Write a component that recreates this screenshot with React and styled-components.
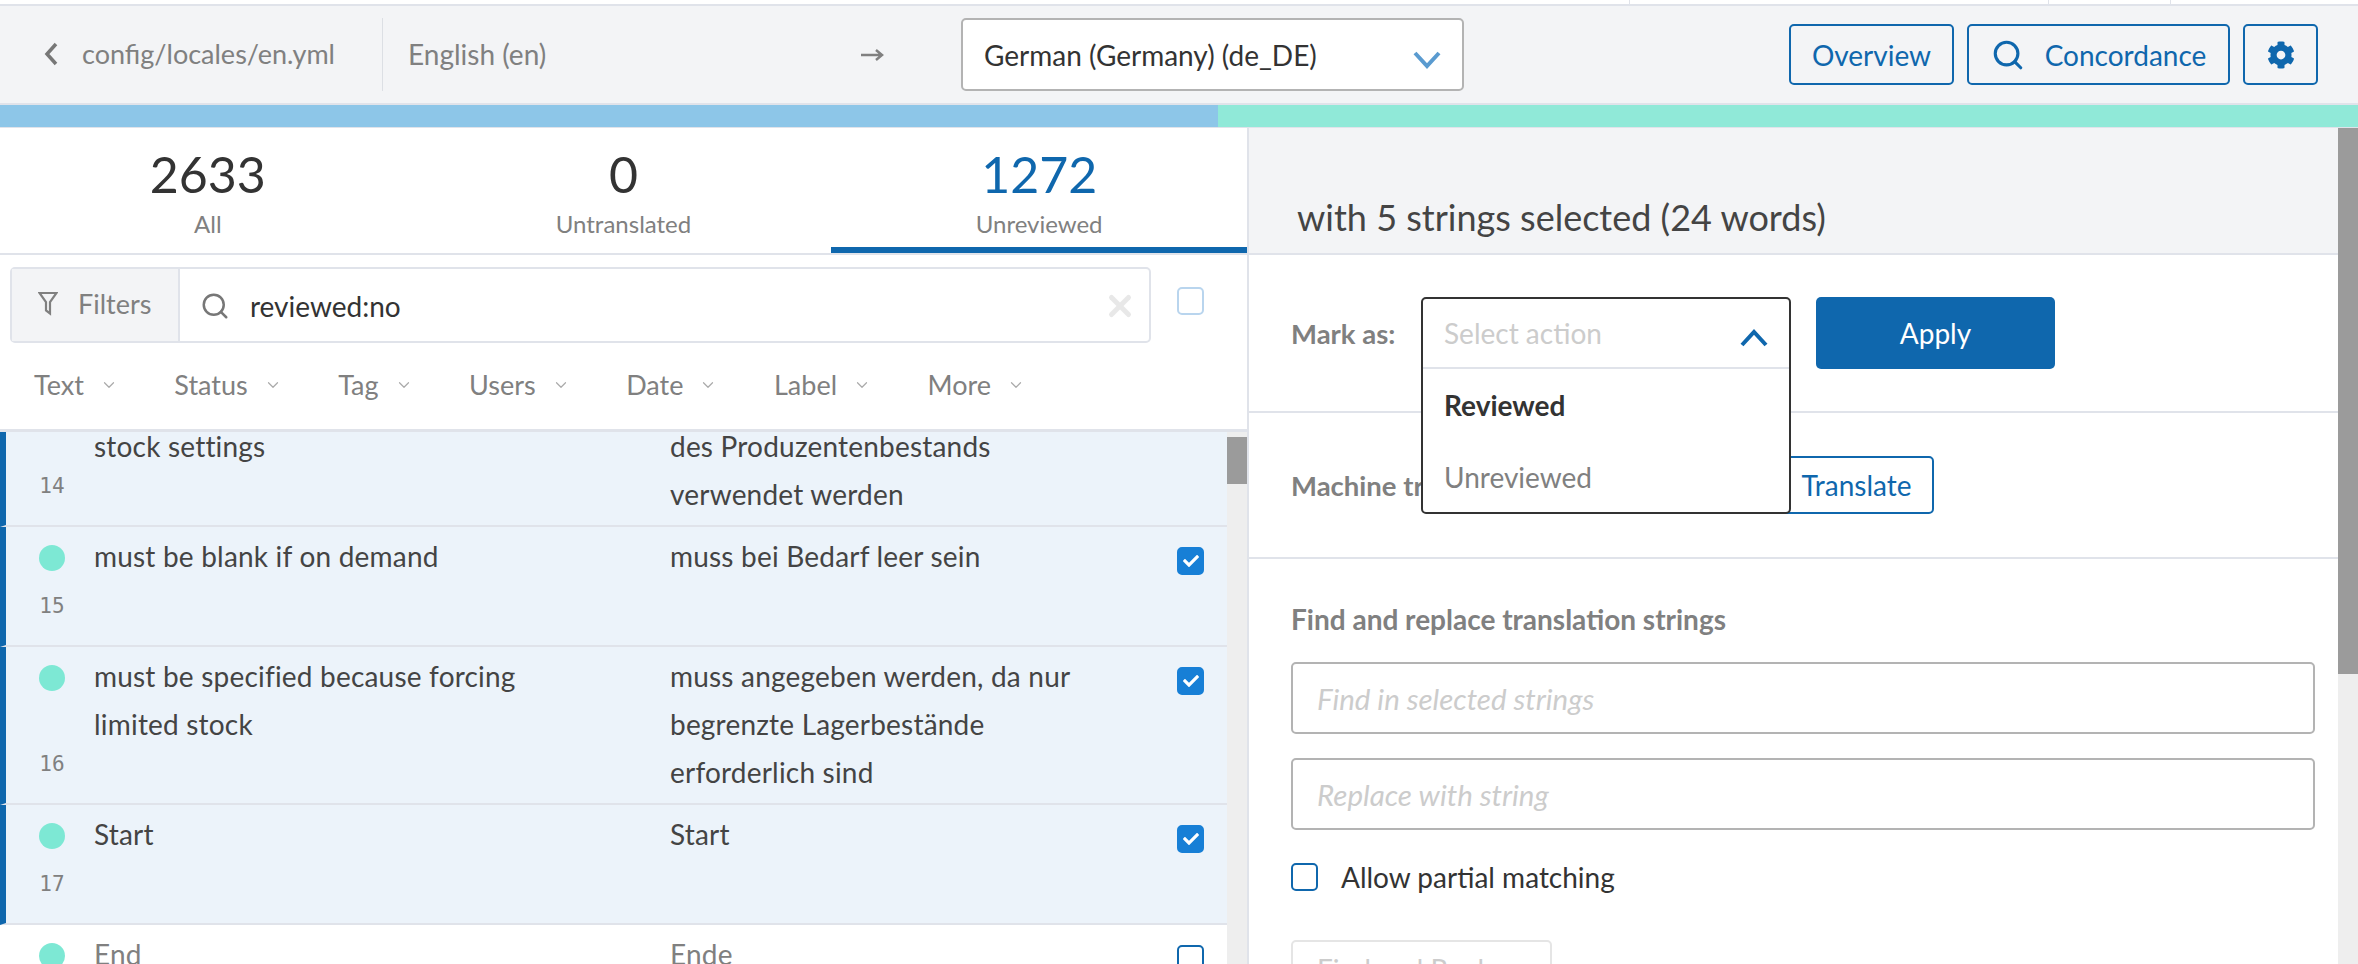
import React from 'react';
import styled, { createGlobalStyle } from 'styled-components';
import { ChevronDown, Search, X } from 'lucide-react';
import { FaCog, FaCheck } from 'react-icons/fa';

const BLUE = '#0f67ad';
const LINE = '#e0e3ea';
const FONT = 'Lato, "Liberation Sans", sans-serif';

const Global = createGlobalStyle`
  html, body { margin: 0; padding: 0; height: 100%; overflow: hidden; background: #fff; }
  body { font-family: ${FONT}; color: #333; }
  #root { height: 100%; }
  * { box-sizing: border-box; }
`;

const Page = styled.div`
  display: flex;
  flex-direction: column;
  width: 2358px;
  height: 964px;
  overflow: hidden;
`;

const TopStrip = styled.div`
  display: flex;
  height: 6px;
  flex: none;
  border-bottom: 2px solid ${LINE};
  background: #fff;
  padding-left: 1629px;
`;

const StripCell = styled.div`
  width: ${props => props.w}px;
  border-left: 1px solid ${LINE};
`;

const Header = styled.header`
  display: flex;
  align-items: center;
  flex: none;
  height: 99px;
  padding: 0 40px 0 38px;
  background: #f3f4f6;
  border-bottom: 2px solid ${LINE};
`;

const BackLink = styled.div`
  display: flex;
  align-items: center;
  gap: 24px;
  width: 345px;
  height: 73px;
  padding-left: 6px;
  padding-bottom: 2px;
  font-size: 27px;
  color: #808080;
  border-right: 1px solid #dcdfe4;
`;

const SourceLang = styled.div`
  width: 478px;
  padding-left: 25px;
  padding-bottom: 2px;
  font-size: 28px;
  color: #808080;
`;

const ArrowGlyph = styled.svg`
  width: 24px;
  height: 14px;
  margin-right: 76px;
  flex: none;
`;

const LangSelect = styled.div`
  display: flex;
  align-items: center;
  justify-content: space-between;
  width: 503px;
  height: 73px;
  padding: 0 21px 0 21px;
  background: #fff;
  border: 2px solid #b3b3b3;
  border-radius: 5px;
  font-size: 28px;
  color: #333;
`;

const Caret = styled.svg`
  flex: none;
  width: 28px;
  height: 18px;
  margin-top: 10px;
  fill: none;
  stroke: ${props => props.color};
  stroke-width: 4;
`;

const HeaderActions = styled.div`
  display: flex;
  gap: 13px;
  margin-left: auto;
`;

const OutlineButton = styled.button`
  display: inline-flex;
  align-items: center;
  justify-content: center;
  gap: 20px;
  height: ${props => props.h || 61}px;
  width: ${props => props.w}px;
  background: #fff;
  border: 2px solid ${BLUE};
  border-radius: 5px;
  color: ${BLUE};
  font-family: ${FONT};
  font-size: 28px;
  padding: 0;
`;

const HeaderButton = styled(OutlineButton)`
  background: #f3f4f6;
`;

const Progress = styled.div`
  display: flex;
  flex: none;
  height: 22px;
`;

const ProgressPart = styled.div`
  width: ${props => props.w};
  background: ${props => props.color};
`;

const Main = styled.div`
  display: flex;
  flex: 1;
  min-height: 0;
  border-top: 1px solid ${LINE};
`;

const LeftPane = styled.section`
  display: flex;
  flex-direction: column;
  width: 1247px;
  flex: none;
  min-height: 0;
`;

const Tabs = styled.div`
  display: grid;
  grid-template-columns: repeat(3, 1fr);
  flex: none;
  height: 127px;
  border-bottom: 2px solid ${LINE};
`;

const Tab = styled.div`
  display: flex;
  flex-direction: column;
  align-items: center;
  height: 125px;
  padding-top: 16px;
  border-bottom: ${props => (props.active ? `6px solid ${BLUE}` : 'none')};
  color: ${props => (props.active ? BLUE : '#333')};
`;

const TabCount = styled.div`
  font-size: 50px;
  line-height: 60px;
`;

const TabLabel = styled.div`
  margin-top: 3px;
  font-size: 24px;
  line-height: 34px;
  color: #808080;
`;

const SearchRow = styled.div`
  display: flex;
  align-items: flex-start;
  flex: none;
  padding: 12px 43px 0 10px;
  gap: 26px;
`;

const SearchBox = styled.div`
  display: flex;
  align-items: stretch;
  flex: 1;
  height: 76px;
  border: 2px solid ${LINE};
  border-radius: 5px;
`;

const FilterButton = styled.div`
  display: flex;
  align-items: center;
  gap: 20px;
  width: 168px;
  padding-left: 26px;
  padding-bottom: 3px;
  background: #f3f4f6;
  border-right: 2px solid ${LINE};
  font-size: 27px;
  color: #808080;
`;

const FunnelIcon = styled.svg`
  flex: none;
  width: 20px;
  height: 25px;
  fill: none;
  stroke: #808080;
  stroke-width: 2.2;
`;

const SearchText = styled.div`
  display: flex;
  align-items: center;
  flex: 1;
  padding: 2px 12px 0 20px;
  gap: 20px;
  font-size: 28px;
  color: #333;
`;

const ClearIcon = styled(X)`
  margin-left: auto;
  color: #e8e8e8;
`;

const Box = styled.span`
  display: inline-flex;
  align-items: center;
  justify-content: center;
  flex: none;
  width: 27px;
  height: 28px;
  border-radius: 5px;
  border: 2px solid ${props => (props.checked ? '#177fd6' : props.tone || BLUE)};
  background: ${props => (props.checked ? '#177fd6' : '#fff')};
  color: #fff;
`;

const TopBox = styled(Box)`
  margin-top: 20px;
`;

const FacetRow = styled.div`
  display: flex;
  align-items: center;
  flex: none;
  height: 86px;
  padding: 0 0 4px 34px;
  gap: 56.5px;
`;

const Facet = styled.div`
  display: flex;
  align-items: center;
  gap: 16px;
  font-size: 27px;
  color: #808080;
`;

const FacetCaret = styled(ChevronDown)`
  color: #aaa;
  margin-top: 2px;
`;

const ListFrame = styled.div`
  display: flex;
  flex: 1;
  min-height: 0;
  border-top: 3px solid ${LINE};
`;

const List = styled.div`
  flex: 1;
  min-width: 0;
  overflow: hidden;
`;

const ListScroll = styled.div`
  margin-top: ${props => -props.offset}px;
`;

const Row = styled.div`
  display: grid;
  grid-template-columns: 88px 576px 507px 27px;
  min-height: 120px;
  padding: 6px 0 6px;
  background: ${props => (props.selected ? '#ecf3fa' : '#fff')};
  border-left: 6px solid ${props => (props.selected ? BLUE : 'transparent')};
  border-bottom: 2px solid ${LINE};
`;

const Gutter = styled.div`
  display: flex;
  flex-direction: column;
  justify-content: space-between;
  padding: 12px 0 21px 33px;
`;

const Dot = styled.span`
  display: block;
  width: 26px;
  height: 26px;
  border-radius: 50%;
  background: #7de8d4;
`;

const LineNumber = styled.span`
  display: block;
  width: 26px;
  text-align: center;
  font-family: "DejaVu Sans Mono", monospace;
  font-size: 21px;
  line-height: 24px;
  color: #808080;
`;

const Cell = styled.div`
  margin: -1px 0 1px;
  font-size: 28px;
  letter-spacing: 0.2px;
  line-height: 48px;
  color: ${props => (props.muted ? '#808080' : '#444')};
`;

const TextLine = styled.div`
  min-height: 48px;
`;

const RowBox = styled(Box)`
  margin-top: 14px;
`;

const Track = styled.div`
  flex: none;
  width: 20px;
  background: #eeeeee;
`;

const Thumb = styled.div`
  height: ${props => props.h}px;
  margin-top: ${props => props.top}px;
  background: #9b9b9b;
`;

const RightPane = styled.section`
  display: flex;
  flex: 1;
  min-width: 0;
  border-left: 2px solid ${LINE};
`;

const RightBody = styled.div`
  flex: 1;
  min-width: 0;
`;

const PanelTitle = styled.div`
  display: flex;
  align-items: flex-end;
  height: 127px;
  padding: 0 0 14px 48px;
  background: #f3f4f6;
  border-bottom: 2px solid ${LINE};
  font-size: 36px;
  line-height: 44px;
  color: #444;
`;

const Section = styled.div`
  display: ${props => (props.stack ? 'block' : 'flex')};
  align-items: center;
  padding: ${props => props.pad};
  border-bottom: ${props => (props.last ? 'none' : `2px solid ${LINE}`)};
`;

const FieldLabel = styled.div`
  flex: ${props => `0 0 ${props.w}px`};
  font-size: 27.5px;
  font-weight: 700;
  color: #808080;
  white-space: nowrap;
`;

const SelectSlot = styled.div`
  position: relative;
  width: 370px;
  height: 72px;
  margin-right: 25px;
`;

const SelectMenu = styled.div`
  position: absolute;
  top: 0;
  left: 0;
  width: 370px;
  height: 217px;
  z-index: 5;
  background: #fff;
  border: 2px solid #333;
  border-radius: 5px;
`;

const SelectHead = styled.div`
  display: flex;
  align-items: center;
  justify-content: space-between;
  height: 70px;
  padding: 0 21px 0 21px;
  border-bottom: 2px solid ${LINE};
  font-size: 28px;
  color: #ccc;
`;

const SelectOption = styled.div`
  display: flex;
  align-items: center;
  height: 72px;
  padding-left: 21px;
  font-size: 28px;
  font-weight: ${props => (props.active ? 700 : 400)};
  color: ${props => (props.active ? '#333' : '#808080')};
`;

const ApplyButton = styled.button`
  width: 239px;
  height: 72px;
  background: ${BLUE};
  border: 0;
  border-radius: 5px;
  color: #fff;
  font-family: ${FONT};
  font-size: 28px;
`;

const SectionHeading = styled.div`
  font-size: 28px;
  line-height: 34px;
  font-weight: 700;
  color: #808080;
  margin-bottom: 26px;
`;

const TextInput = styled.input`
  display: block;
  width: 1024px;
  height: 72px;
  margin-bottom: 24px;
  padding: 0 24px;
  background: #fff;
  border: 2px solid #b3b3b3;
  border-radius: 5px;
  font-family: ${FONT};
  font-size: 29.5px;
  &::placeholder {
    color: #ccc;
    font-style: italic;
    opacity: 1;
  }
`;

const CheckRow = styled.label`
  display: flex;
  align-items: center;
  gap: 23px;
  margin: 30px 0 46px;
  font-size: 28px;
  color: #333;
`;

const DisabledButton = styled.button`
  display: block;
  width: 261px;
  height: 58px;
  background: #fff;
  border: 2px solid #e5e5e5;
  border-radius: 5px;
  color: #ccc;
  font-family: ${FONT};
  font-size: 28px;
`;

const BackChevron = styled.svg`
  flex: none;
  width: 14px;
  height: 24px;
  fill: none;
  stroke: #777;
  stroke-width: 3.5;
`;

const rows = [
  { n: 14, selected: true, clipped: true, source: ['\u00a0', 'stock settings'], target: ['\u00a0', 'des Produzentenbestands', 'verwendet werden'] },
  { n: 15, selected: true, source: ['must be blank if on demand'], target: ['muss bei Bedarf leer sein'] },
  { n: 16, selected: true, source: ['must be specified because forcing', 'limited stock'], target: ['muss angegeben werden, da nur', 'begrenzte Lagerbestände', 'erforderlich sind'] },
  { n: 17, selected: true, source: ['Start'], target: ['Start'] },
  { n: 18, selected: false, source: ['End'], target: ['Ende'] },
];

const facets = ['Text', 'Status', 'Tag', 'Users', 'Date', 'Label', 'More'];

function App() {
  return (
    <Page>
      <Global />
      <TopStrip>
        <StripCell w={419} />
        <StripCell w={122} />
        <StripCell w={188} />
      </TopStrip>

      <Header>
        <BackLink>
          <BackChevron viewBox="0 0 14 24">
            <polyline points="12,2 3,12 12,22" />
          </BackChevron>
          config/locales/en.yml
        </BackLink>
        <SourceLang>English (en)</SourceLang>
        <ArrowGlyph viewBox="0 0 24 14">
          <path d="M0 7h20M15 2l6 5-6 5" fill="none" stroke="#808080" strokeWidth="2.5" />
        </ArrowGlyph>
        <LangSelect>
          German (Germany) (de_DE)
          <Caret viewBox="0 0 28 18" color="#5a9bd0">
            <polyline points="2,2 14,15 26,2" />
          </Caret>
        </LangSelect>
        <HeaderActions>
          <HeaderButton w={165}>Overview</HeaderButton>
          <HeaderButton w={263}>
            <Search size={34} strokeWidth={2.2} />
            Concordance
          </HeaderButton>
          <HeaderButton w={75}>
            <FaCog size={28} />
          </HeaderButton>
        </HeaderActions>
      </Header>

      <Progress>
        <ProgressPart w="1218px" color="#8dc6e8" />
        <ProgressPart w="1140px" color="#90e9d8" />
      </Progress>

      <Main>
        <LeftPane>
          <Tabs>
            <Tab>
              <TabCount>2633</TabCount>
              <TabLabel>All</TabLabel>
            </Tab>
            <Tab>
              <TabCount>0</TabCount>
              <TabLabel>Untranslated</TabLabel>
            </Tab>
            <Tab active>
              <TabCount>1272</TabCount>
              <TabLabel>Unreviewed</TabLabel>
            </Tab>
          </Tabs>

          <SearchRow>
            <SearchBox>
              <FilterButton>
                <FunnelIcon viewBox="0 0 20 25">
                  <path d="M1.5 2h17l-6.5 9v11.5l-4-3V11z" />
                </FunnelIcon>
                Filters
              </FilterButton>
              <SearchText>
                <Search size={30} strokeWidth={2} color="#777" />
                reviewed:no
                <ClearIcon size={34} strokeWidth={3.5} />
              </SearchText>
            </SearchBox>
            <TopBox tone="#b9d5ee" />
          </SearchRow>

          <FacetRow>
            {facets.map(f => (
              <Facet key={f}>
                {f}
                <FacetCaret size={18} strokeWidth={1.6} />
              </Facet>
            ))}
          </FacetRow>

          <ListFrame>
            <List>
              <ListScroll offset={63}>
                {rows.map(row => (
                  <Row key={row.n} selected={row.selected}>
                    <Gutter>
                      {row.clipped ? <span /> : <Dot />}
                      <LineNumber>{row.n}</LineNumber>
                    </Gutter>
                    <Cell muted={!row.selected}>
                      {row.source.map((t, i) => <TextLine key={i}>{t}</TextLine>)}
                    </Cell>
                    <Cell muted={!row.selected}>
                      {row.target.map((t, i) => <TextLine key={i}>{t}</TextLine>)}
                    </Cell>
                    <div>
                      {!row.clipped && (
                        <RowBox checked={row.selected}>
                          {row.selected && <FaCheck size={16} />}
                        </RowBox>
                      )}
                    </div>
                  </Row>
                ))}
              </ListScroll>
            </List>
            <Track>
              <Thumb top={5} h={47} />
            </Track>
          </ListFrame>
        </LeftPane>

        <RightPane>
          <RightBody>
            <PanelTitle>with 5 strings selected (24 words)</PanelTitle>

            <Section pad="42px 0 42px 42px">
              <FieldLabel w={130}>Mark as:</FieldLabel>
              <SelectSlot>
                <SelectMenu>
                  <SelectHead>
                    Select action
                    <Caret viewBox="0 0 28 18" color={BLUE}>
                      <polyline points="2,16 14,3 26,16" />
                    </Caret>
                  </SelectHead>
                  <SelectOption active>Reviewed</SelectOption>
                  <SelectOption>Unreviewed</SelectOption>
                </SelectMenu>
              </SelectSlot>
              <ApplyButton>Apply</ApplyButton>
            </Section>

            <Section pad="43px 0 43px 42px">
              <FieldLabel w={488}>Machine translation</FieldLabel>
              <OutlineButton w={155} h={58}>Translate</OutlineButton>
            </Section>

            <Section stack last pad="43px 0 0 42px">
              <SectionHeading>Find and replace translation strings</SectionHeading>
              <TextInput placeholder="Find in selected strings" />
              <TextInput placeholder="Replace with string" />
              <CheckRow>
                <Box />
                Allow partial matching
              </CheckRow>
              <DisabledButton>Find and Replace</DisabledButton>
            </Section>
          </RightBody>
          <Track>
            <Thumb top={0} h={546} />
          </Track>
        </RightPane>
      </Main>
    </Page>
  );
}

export default App;
